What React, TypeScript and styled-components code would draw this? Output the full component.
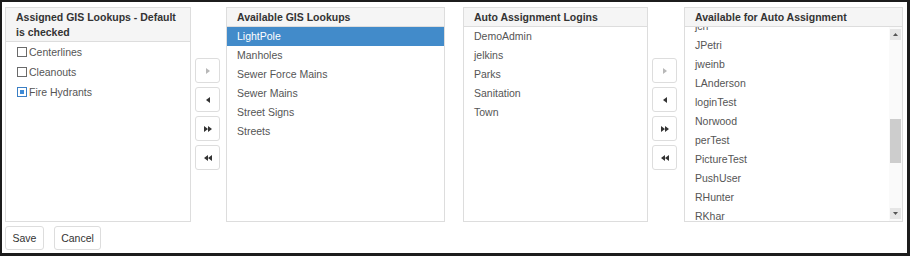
import React from 'react'
import styled, { createGlobalStyle } from 'styled-components'

const GlobalStyle = createGlobalStyle`
  html, body {
    margin: 0;
    padding: 0;
    background: #fff;
  }
  body {
    font-family: "Liberation Sans", Arial, sans-serif;
    font-size: 10px;
    color: #333;
  }
`

const Frame = styled.div`
  width: 910px;
  height: 256px;
  box-sizing: border-box;
  border-style: solid;
  border-color: #1c1c1c;
  border-width: 2px 3px 3px 2px;
  padding: 5px 0 0 3px;
  display: flex;
  flex-direction: column;
  gap: 4px;
  background: #fff;
`

const Row = styled.div`
  display: flex;
  height: 215px;
`

const Panel = styled.div<{ $width: number; $offset: number }>`
  width: ${({ $width }) => $width}px;
  margin-left: ${({ $offset }) => $offset}px;
  box-sizing: border-box;
  border: 1px solid #dddddd;
  display: flex;
  flex-direction: column;
  overflow: hidden;
`

const PanelHeader = styled.div`
  background: #f5f5f5;
  border-bottom: 1px solid #dddddd;
  padding: 2px 10px 1px;
  line-height: 15px;
  font-size: 10.5px;
  font-weight: bold;
  color: #333;
`

const ItemList = styled.div<{ $shift?: number }>`
  display: flex;
  flex-direction: column;
  margin-top: ${({ $shift }) => -($shift || 0)}px;
`

const Item = styled.div<{ $selected?: boolean }>`
  height: 19px;
  line-height: 19px;
  padding-left: 10px;
  font-size: 10.5px;
  color: ${({ $selected }) => ($selected ? '#fff' : '#555')};
  background: ${({ $selected }) => ($selected ? '#428bca' : 'transparent')};
  white-space: nowrap;
`

const CheckItem = styled.label`
  display: flex;
  align-items: center;
  height: 20px;
  padding-left: 11px;
  font-size: 10.5px;
  color: #555;
  gap: 2px;
`

const CheckBox = styled.span<{ $checked?: boolean }>`
  width: 10px;
  height: 10px;
  box-sizing: border-box;
  border: 1px solid ${({ $checked }) => ($checked ? '#3b7fc4' : '#6a6a6a')};
  background: #fff;
  display: flex;
  align-items: center;
  justify-content: center;
  &::after {
    content: '';
    width: 4px;
    height: 4px;
    background: ${({ $checked }) => ($checked ? '#3f8bd6' : 'transparent')};
  }
`

const MoveColumn = styled.div<{ $offset: number }>`
  margin-left: ${({ $offset }) => $offset}px;
  width: 25px;
  padding-top: 51px;
  display: flex;
  flex-direction: column;
  gap: 4px;
`

const MoveButton = styled.button<{ $disabled?: boolean }>`
  width: 25px;
  height: 25px;
  padding: 0;
  box-sizing: border-box;
  border: 1px solid #dddddd;
  border-radius: 3px;
  background: #fff;
  display: flex;
  align-items: center;
  justify-content: center;
  color: ${({ $disabled }) => ($disabled ? '#b8b8b8' : '#333')};
`

const ScrollBody = styled.div`
  flex: 1;
  display: flex;
  min-height: 0;
`

const ScrollView = styled.div`
  flex: 1;
  overflow: hidden;
`

const ScrollTrack = styled.div`
  width: 13px;
  box-sizing: border-box;
  padding: 2px 1px 2px 1px;
  background: #fafafa;
  display: flex;
  flex-direction: column;
  align-items: center;
`

const ScrollArrow = styled.div`
  width: 11px;
  height: 11px;
  background: #e6e6e6;
  display: flex;
  align-items: center;
  justify-content: center;
  color: #555;
`

const ScrollThumb = styled.div`
  width: 11px;
  height: 44px;
  margin-top: 79px;
  background: #cdcdcd;
`

const Spacer = styled.div`
  flex: 1;
`

const Footer = styled.div`
  display: flex;
  gap: 10px;
`

const FooterButton = styled.button<{ $width: number }>`
  width: ${({ $width }) => $width}px;
  height: 24px;
  padding: 0;
  box-sizing: border-box;
  border: 1px solid #dddddd;
  border-radius: 3px;
  background: #fff;
  font-family: "Liberation Sans", Arial, sans-serif;
  font-size: 10.5px;
  color: #333;
`

type Dir = 'right' | 'left' | 'rightAll' | 'leftAll'

const Arrow = ({ dir }: { dir: Dir }) => {
  const one = (x: number, right: boolean) =>
    right ? `M${x} 0 L${x + 4} 3 L${x} 6 Z` : `M${x + 4} 0 L${x} 3 L${x + 4} 6 Z`
  let d = ''
  let w = 4
  if (dir === 'right') d = one(0, true)
  if (dir === 'left') d = one(0, false)
  if (dir === 'rightAll') { d = one(0, true) + one(4, true); w = 8 }
  if (dir === 'leftAll') { d = one(0, false) + one(4, false); w = 8 }
  return (
    <svg width={w} height={6} viewBox={`0 0 ${w} 6`}>
      <path d={d} fill="currentColor" />
    </svg>
  )
}

const Tri = ({ up }: { up: boolean }) => (
  <svg width={5} height={3} viewBox="0 0 5 3">
    <path d={up ? 'M0 3 L2.5 0 L5 3 Z' : 'M0 0 L2.5 3 L5 0 Z'} fill="currentColor" />
  </svg>
)

const MoveButtons = ({ offset }: { offset: number }) => (
  <MoveColumn $offset={offset}>
    <MoveButton $disabled><Arrow dir="right" /></MoveButton>
    <MoveButton><Arrow dir="left" /></MoveButton>
    <MoveButton><Arrow dir="rightAll" /></MoveButton>
    <MoveButton><Arrow dir="leftAll" /></MoveButton>
  </MoveColumn>
)

const assigned = [
  { name: 'Centerlines', checked: false },
  { name: 'Cleanouts', checked: false },
  { name: 'Fire Hydrants', checked: true },
]

const available = ['LightPole', 'Manholes', 'Sewer Force Mains', 'Sewer Mains', 'Street Signs', 'Streets']

const logins = ['DemoAdmin', 'jelkins', 'Parks', 'Sanitation', 'Town']

const forAuto = [
  'jcn', 'JPetri', 'jweinb', 'LAnderson', 'loginTest', 'Norwood', 'perTest',
  'PictureTest', 'PushUser', 'RHunter', 'RKhar', 'SBrown',
]

export default function App() {
  return (
    <>
      <GlobalStyle />
      <Frame>
        <Row>
          <Panel $width={186} $offset={0}>
            <PanelHeader>Assigned GIS Lookups - Default is checked</PanelHeader>
            <div>
              {assigned.map(a => (
                <CheckItem key={a.name}>
                  <CheckBox $checked={a.checked} />
                  {a.name}
                </CheckItem>
              ))}
            </div>
          </Panel>
          <MoveButtons offset={4} />
          <Panel $width={219} $offset={6}>
            <PanelHeader>Available GIS Lookups</PanelHeader>
            <ItemList>
              {available.map((n, i) => (
                <Item key={n} $selected={i === 0}>{n}</Item>
              ))}
            </ItemList>
          </Panel>
          <Panel $width={185} $offset={18}>
            <PanelHeader>Auto Assignment Logins</PanelHeader>
            <ItemList>
              {logins.map(n => <Item key={n}>{n}</Item>)}
            </ItemList>
          </Panel>
          <MoveButtons offset={4} />
          <Panel $width={219} $offset={7}>
            <PanelHeader>Available for Auto Assignment</PanelHeader>
            <ScrollBody>
              <ScrollView>
                <ItemList $shift={10}>
                  {forAuto.map(n => <Item key={n}>{n}</Item>)}
                </ItemList>
              </ScrollView>
              <ScrollTrack>
                <ScrollArrow><Tri up /></ScrollArrow>
                <ScrollThumb />
                <Spacer />
                <ScrollArrow><Tri up={false} /></ScrollArrow>
              </ScrollTrack>
            </ScrollBody>
          </Panel>
        </Row>
        <Footer>
          <FooterButton $width={39}>Save</FooterButton>
          <FooterButton $width={47}>Cancel</FooterButton>
        </Footer>
      </Frame>
    </>
  )
}
